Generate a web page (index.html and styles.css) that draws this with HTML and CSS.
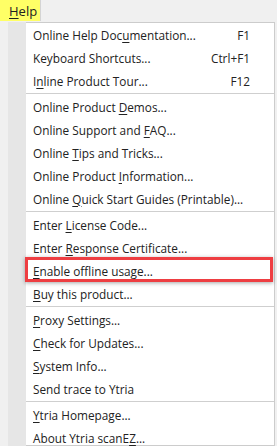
FILE: index.html
```html
<!DOCTYPE html>
<html lang="en">
<head>
  <meta charset="UTF-8">
  <meta name="viewport" content="width=device-width, initial-scale=1.0">
  <title>Help menu</title>
  <link rel="stylesheet" href="styles.css">
</head>
<body>
  <!-- Menu bar with the open Help entry -->
  <div class="menubar">
    <div class="menubar-tab"><u>H</u>elp</div>
  </div>

  <div class="window">
    <div class="gutter"></div>

    <div class="menu">
      <div class="item"><span>Online Help Doc<u>u</u>mentation...</span><span class="key">F1</span></div>
      <div class="item"><span>Keyboard Shortcuts...</span><span class="key">Ctrl+F1</span></div>
      <div class="item"><span>I<u>n</u>line Product Tour...</span><span class="key">F12</span></div>
      <div class="sep"></div>
      <div class="item"><span>Online Product <u>D</u>emos...</span></div>
      <div class="item"><span>Online Support and <u>F</u>AQ...</span></div>
      <div class="item"><span>Online <u>T</u>ips and Tricks...</span></div>
      <div class="item"><span>Online Product <u>I</u>nformation...</span></div>
      <div class="item"><span>Online <u>Q</u>uick Start Guides (Printable)...</span></div>
      <div class="sep"></div>
      <div class="item"><span>Enter <u>L</u>icense Code...</span></div>
      <div class="item"><span>Enter <u>R</u>esponse Certificate...</span></div>
      <div class="item marked"><span><u>E</u>nable offline usage...</span></div>
      <div class="item"><span><u>B</u>uy this product...</span></div>
      <div class="sep"></div>
      <div class="item"><span><u>P</u>roxy Settings...</span></div>
      <div class="item"><span><u>C</u>heck for Updates...</span></div>
      <div class="item"><span><u>S</u>ystem Info...</span></div>
      <div class="item"><span>Send trace to Ytria</span></div>
      <div class="sep"></div>
      <div class="item"><span><u>Y</u>tria Homepage...</span></div>
      <div class="item"><span>About Ytria scanE<u>Z</u>...</span></div>
    </div>
  </div>
</body>
</html>
```

FILE: styles.css
```css
/* Page */
body {
  margin: 0;
  width: 277px;
  height: 446px;
  overflow: hidden;
  background-color: #f0f0f0;
  font-family: "Open Sans", "Noto Sans", Arial, sans-serif;
  font-size: 11.8px;
  color: #222222;
}

u {
  text-decoration-thickness: 1px;
  text-underline-offset: 2px;
}

/* Menu bar */
.menubar {
  height: 22px;
  display: flex;
}

.menubar-tab {
  width: 41px;
  height: 21px;
  background-color: #ffff66;
  border-right: 1px solid #d4d4d4;
  display: flex;
  align-items: center;
  padding-left: 9px;
  box-sizing: border-box;
  font-size: 13px;
}

/* Window area under the bar */
.window {
  display: flex;
  height: 424px;
}

.gutter {
  width: 18px;
  margin-left: 8px;
  background-color: #e6e6e6;
}

/* Drop-down menu */
.menu {
  flex: 1;
  margin-right: 2px;
  background-color: #ffffff;
  border: 1px solid #cccccc;
  border-left: none;
  height: 422px;
}

.item {
  position: relative;
  height: 23px;
  display: flex;
  align-items: center;
  justify-content: space-between;
  padding: 0 24px 0 7px;
  white-space: nowrap;
}

.key {
  text-align: right;
}

.sep {
  height: 1px;
  margin: 1px 0;
  background-color: #cfcfcf;
}

/* Red annotation box around one entry */
.marked::after {
  content: "";
  position: absolute;
  left: -1px;
  right: 1px;
  top: -2px;
  bottom: 0;
  border: 3px solid #ee3e42;
  box-shadow: 0 1px 4px rgba(0, 0, 0, 0.35);
}
```
